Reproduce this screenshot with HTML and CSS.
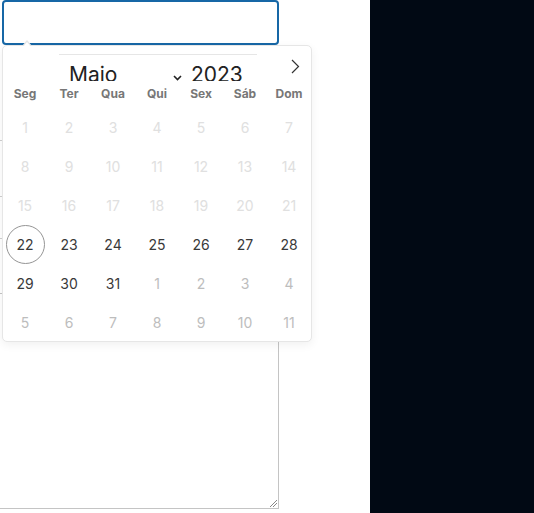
FILE: index.html
```html
<!DOCTYPE html>
<html lang="pt">
<head>
<meta charset="utf-8">
<title>Calendário</title>
<link rel="stylesheet" href="styles.css">
</head>
<body>
<div class="page">
  <div class="main">
    <div class="date-input"></div>
    <div class="tick t1"></div>
    <div class="tick t2"></div>
    <div class="tick t3"></div>
    <div class="textarea">
      <svg class="grip" width="8" height="8" viewBox="0 0 8 8"><path d="M1 8 L8 1 M4 8 L8 4" stroke="#888" stroke-width="1" fill="none"/></svg>
    </div>

    <div class="calendar">
      <div class="cal-head">
        <div class="month-bar">
          <span class="month">Maio</span>
          <svg class="caret" width="9" height="6" viewBox="0 0 9 6"><path d="M1 1 L4.5 4.5 L8 1" stroke="#222" stroke-width="1.6" fill="none"/></svg>
          <span class="year">2023</span>
        </div>
        <svg class="next" width="9" height="15" viewBox="0 0 9 15"><path d="M1 1 L7.5 7.5 L1 14" stroke="#333" stroke-width="1.2" fill="none"/></svg>
      </div>
      <div class="weekdays">
        <span>Seg</span><span>Ter</span><span>Qua</span><span>Qui</span><span>Sex</span><span>Sáb</span><span>Dom</span>
      </div>
      <div class="days">
        <span class="off">1</span><span class="off">2</span><span class="off">3</span><span class="off">4</span><span class="off">5</span><span class="off">6</span><span class="off">7</span>
        <span class="off">8</span><span class="off">9</span><span class="off">10</span><span class="off">11</span><span class="off">12</span><span class="off">13</span><span class="off">14</span>
        <span class="off">15</span><span class="off">16</span><span class="off">17</span><span class="off">18</span><span class="off">19</span><span class="off">20</span><span class="off">21</span>
        <span class="today"><i>22</i></span><span>23</span><span>24</span><span>25</span><span>26</span><span>27</span><span>28</span>
        <span>29</span><span>30</span><span>31</span><span class="next-m">1</span><span class="next-m">2</span><span class="next-m">3</span><span class="next-m">4</span>
        <span class="next-m">5</span><span class="next-m">6</span><span class="next-m">7</span><span class="next-m">8</span><span class="next-m">9</span><span class="next-m">10</span><span class="next-m">11</span>
      </div>
    </div>
  </div>
  <div class="dark"></div>
</div>
</body>
</html>
```

FILE: styles.css
```css
html, body {
  margin: 0;
  padding: 0;
  background: #fff;
  overflow: hidden;
}
body {
  font-family: "Inter", "Noto Sans", sans-serif;
}
.page {
  display: flex;
  width: 534px;
  height: 513px;
}
.main {
  width: 370px;
  position: relative;
  display: flex;
  flex-direction: column;
}
.dark {
  flex: 1;
  background: #010914;
}
.date-input {
  margin-left: 2px;
  width: 277px;
  height: 45px;
  box-sizing: border-box;
  border: 2px solid #1767a6;
  border-radius: 4px;
}
.tick {
  width: 3px;
  height: 0;
  border-top: 1px solid #cfcfcf;
}
.t1 { margin-top: 95px; }
.t2 { margin-top: 55px; }
.t3 { margin-top: 41px; }
.textarea {
  margin-top: 54px;
  margin-left: -2px;
  width: 281px;
  height: 216px;
  box-sizing: border-box;
  border: 1px solid #c4c4c4;
  position: relative;
}
.grip {
  position: absolute;
  right: 1px;
  bottom: 1px;
}

.calendar {
  position: absolute;
  left: 2px;
  top: 45px;
  width: 310px;
  height: 297px;
  box-sizing: border-box;
  background: #fff;
  border: 1px solid #e6e6e6;
  border-radius: 5px;
  box-shadow: 0 3px 10px rgba(0, 0, 0, 0.06);
}
.calendar::before,
.calendar::after {
  content: "";
  position: absolute;
  left: 19px;
  border: solid transparent;
}
.calendar::before {
  top: -6px;
  border-width: 0 5px 6px 5px;
  border-bottom-color: #e6e6e6;
}
.calendar::after {
  top: -4px;
  left: 20px;
  border-width: 0 4px 5px 4px;
  border-bottom-color: #fff;
}
.cal-head {
  position: relative;
  height: 35px;
  overflow: hidden;
}
.month-bar {
  position: absolute;
  left: 56px;
  top: 8px;
  width: 198px;
  border-top: 1px solid #e6e6e6;
  display: flex;
  align-items: flex-start;
  padding-top: 6px;
}
.month {
  font-size: 21px;
  line-height: 28px;
  color: #222;
  margin-left: 10px;
  width: 104px;
}
.caret {
  margin-top: 14px;
}
.year {
  font-size: 21px;
  line-height: 28px;
  color: #222;
  margin-left: 9px;
}
.next {
  position: absolute;
  left: 288px;
  top: 13px;
}
.weekdays {
  display: grid;
  grid-template-columns: repeat(7, 44px);
  height: 25px;
  align-items: center;
}
.weekdays span {
  text-align: center;
  font-size: 12px;
  font-weight: 700;
  color: #777;
}
.days {
  display: grid;
  grid-template-columns: repeat(7, 44px);
  grid-auto-rows: 39px;
  margin-top: 2px;
}
.days span {
  display: flex;
  align-items: center;
  justify-content: center;
  font-size: 14px;
  color: #393939;
}
.days span.off {
  color: #e0e0e0;
}
.days span.next-m {
  color: #bdbdbd;
}
.days .today i {
  font-style: normal;
  width: 39px;
  height: 39px;
  box-sizing: border-box;
  border: 1px solid #959595;
  border-radius: 50%;
  display: flex;
  align-items: center;
  justify-content: center;
}
```
